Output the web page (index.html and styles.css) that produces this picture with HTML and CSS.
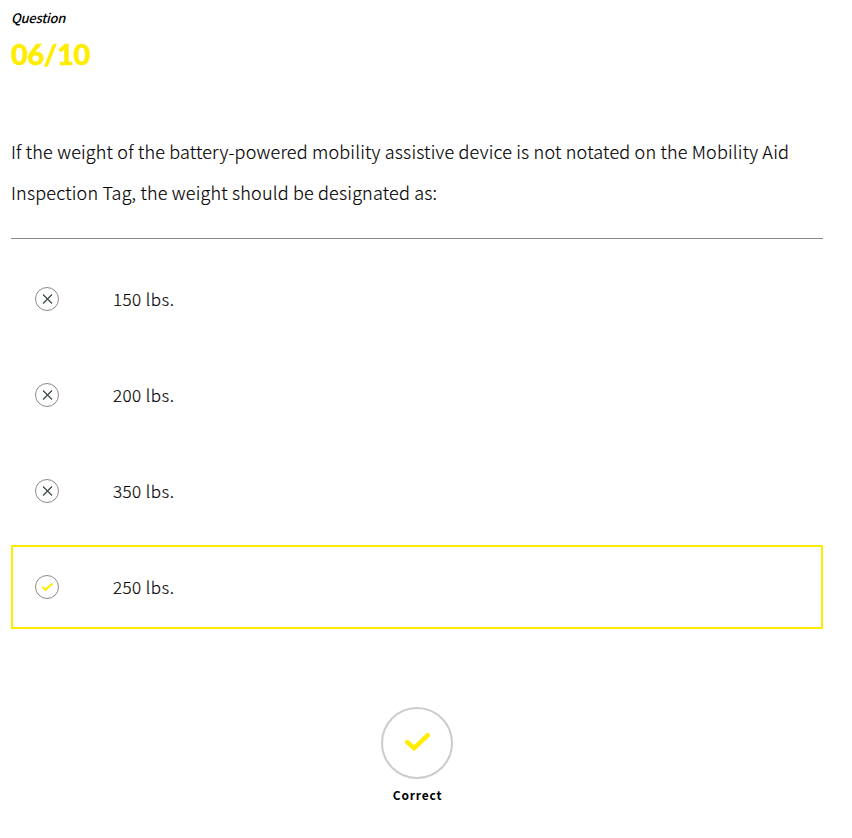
FILE: index.html
```html
<!DOCTYPE html>
<html lang="en">
<head>
<meta charset="utf-8">
<title>Question 06/10</title>
<link rel="stylesheet" href="styles.css">
</head>
<body>
<main class="quiz">
  <header>
    <div class="label"><span>Question</span></div>
    <div class="count"><span>06/10</span></div>
  </header>
  <h1 class="prompt">If the weight of the battery-powered mobility assistive device is not notated on the Mobility Aid<br>Inspection Tag, the weight should be designated as:</h1>
  <ul class="answers">
    <li class="answer"><svg class="mark" viewBox="0 0 24 24"><circle cx="12" cy="12" r="11.5"/><path class="cross" d="M8 7.5l9 9M17 7.5l-9 9"/></svg><span>150 lbs.</span></li>
    <li class="answer"><svg class="mark" viewBox="0 0 24 24"><circle cx="12" cy="12" r="11.5"/><path class="cross" d="M8 7.5l9 9M17 7.5l-9 9"/></svg><span>200 lbs.</span></li>
    <li class="answer"><svg class="mark" viewBox="0 0 24 24"><circle cx="12" cy="12" r="11.5"/><path class="cross" d="M8 7.5l9 9M17 7.5l-9 9"/></svg><span>350 lbs.</span></li>
    <li class="answer correct"><svg class="mark" viewBox="0 0 24 24"><circle cx="12" cy="12" r="11.5"/><path class="tick" d="M7.4 11.8l3.1 3 6.9-6.3"/></svg><span>250 lbs.</span></li>
  </ul>
  <footer class="result">
    <svg class="badge" viewBox="0 0 72 72"><circle cx="36" cy="36" r="35"/><path d="M26.4 35.1l6.7 6 13.6-12.8"/></svg>
    <strong>Correct</strong>
  </footer>
</main>
</body>
</html>
```
FILE: styles.css
```css
* { box-sizing: border-box; }
body {
  margin: 0;
  background: #fff;
  color: #000;
  font-family: "Noto Sans CJK SC", "Open Sans", sans-serif;
}
.quiz { width: 812px; margin-left: 11px; padding-top: 8px; }
.label { height: 20px; font-size: 13px; line-height: 20px; font-weight: 500; font-style: italic; letter-spacing: -0.25px; }
.count { height: 40px; margin-top: 6px; font-family: Lato, sans-serif; font-size: 29px; line-height: 40px; font-weight: 900; letter-spacing: -0.4px; color: #ffed00; -webkit-text-stroke: 0.5px #ffed00; }
.prompt {
  height: 108px;
  margin: 57px 0 0;
  font-size: 18px;
  line-height: 41px;
  font-weight: 300;
  letter-spacing: 0.19px;
  white-space: nowrap;
  border-bottom: 1px solid #888;
  -webkit-text-stroke: 0.15px #000;
}
.answers { margin: 18px 0 0; padding: 0; list-style: none; display: grid; gap: 12px; }
.answer {
  height: 84px;
  display: flex;
  align-items: center;
  gap: 54px;
  padding-left: 22px;
  border: 2px solid transparent;
  font-size: 17px;
  line-height: 24px;
  font-weight: 300;
  letter-spacing: 0.45px;
  -webkit-text-stroke: 0.15px #000;
}
.answer span { padding-bottom: 1px; }
.correct { border-color: #ffed00; }
.mark { width: 24px; height: 24px; fill: none; }
.mark circle { stroke: #888; }
.cross { stroke: #3d474c; stroke-width: 1.2; }
.tick { stroke: #ffed00; stroke-width: 2; }
.result { margin-top: 78px; display: flex; flex-direction: column; align-items: center; }
.badge { width: 72px; height: 72px; fill: none; }
.badge circle { stroke: #ccc; stroke-width: 2; }
.badge path { stroke: #ffed00; stroke-width: 4.6; stroke-linecap: round; }
.result strong { margin-top: 6px; padding-left: 1px; font-size: 12px; line-height: 20px; font-weight: 700; letter-spacing: 0.8px; }
```
